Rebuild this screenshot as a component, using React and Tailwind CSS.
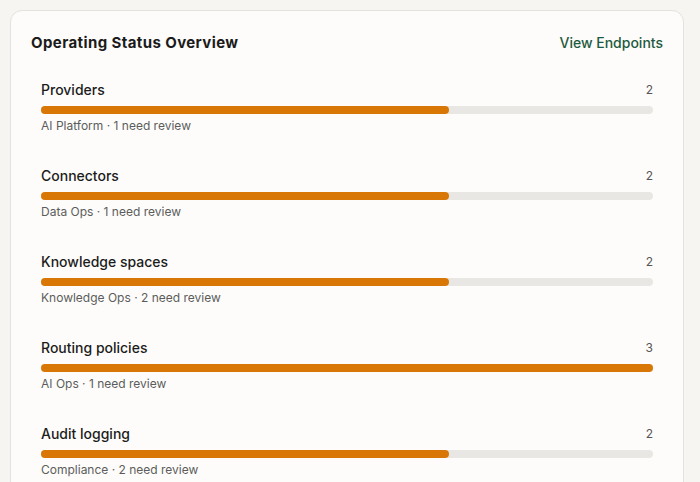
const rows = [
  { name: "Providers", team: "AI Platform", review: 1, count: 2 },
  { name: "Connectors", team: "Data Ops", review: 1, count: 2 },
  { name: "Knowledge spaces", team: "Knowledge Ops", review: 2, count: 2 },
  { name: "Routing policies", team: "AI Ops", review: 1, count: 3 },
  { name: "Audit logging", team: "Compliance", review: 2, count: 2 },
];

const max = 3;

export default function App() {
  return (
    <div className="h-[482px] w-[700px] overflow-hidden bg-[#f6f5f2] pt-[10px] pl-[10px] font-['Inter',sans-serif]">
      <div className="w-[674px] rounded-xl border border-[#e4e2de] bg-[#fdfcfa] px-5 pt-5 pb-8">
        <div className="flex h-6 items-center justify-between">
          <h2 className="text-[15px] font-bold tracking-[0.4px] text-[#1b1b1b]">
            Operating Status Overview
          </h2>
          <a className="text-sm font-medium text-[#1d5a3e]">View Endpoints</a>
        </div>
        <div className="mt-[25px] flex flex-col gap-8 px-2.5">
          {rows.map((r) => (
            <div key={r.name}>
              <div className="flex h-5 items-center justify-between">
                <span className="text-sm font-medium text-[#1c1c1c]">{r.name}</span>
                <span className="text-xs text-[#555]">{r.count}</span>
              </div>
              <div className="mt-1.5 h-2 w-full rounded-full bg-[#e9e7e4]">
                <div
                  className="h-2 rounded-full bg-[#d97706]"
                  style={{ width: `${(r.count / max) * 100}%` }}
                />
              </div>
              <p className="mt-1 h-4 text-xs leading-4 text-[#5c5c5c]">
                {r.team} · {r.review} need review
              </p>
            </div>
          ))}
        </div>
      </div>
    </div>
  );
}
